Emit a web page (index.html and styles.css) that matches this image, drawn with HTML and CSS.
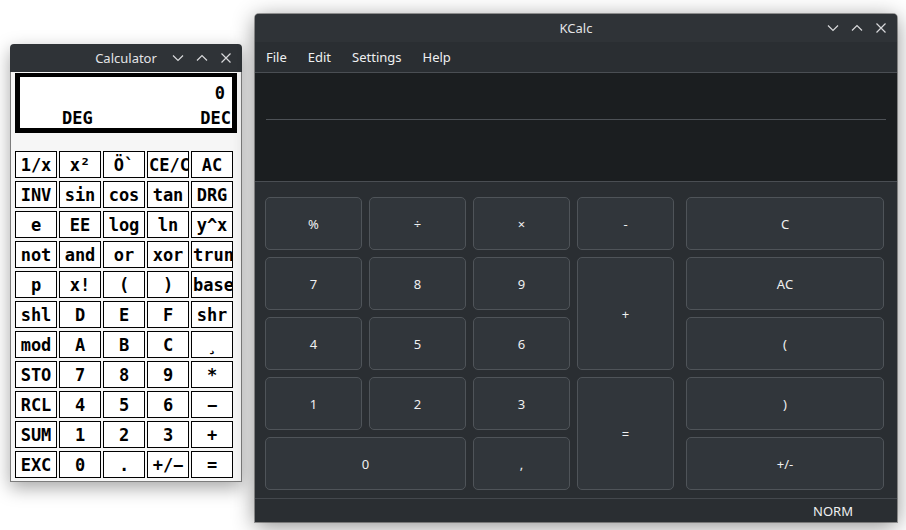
FILE: index.html
```html
<!DOCTYPE html>
<html>
<head>
<meta charset="utf-8">
<link rel="stylesheet" href="styles.css">
</head>
<body>
<div class="desk">
  <div class="win calc">
    <div class="tbar">
      <span></span>
      <span class="ttl">Calculator</span>
      <div class="ctrls">
        <span class="ctl"><svg width="12" height="12" viewBox="0 0 12 12"><polyline points="1,3.5 6,8.5 11,3.5"/></svg></span>
        <span class="ctl"><svg width="12" height="12" viewBox="0 0 12 12"><polyline points="1,8.5 6,3.5 11,8.5"/></svg></span>
        <span class="ctl"><svg width="12" height="12" viewBox="0 0 12 12"><path d="M1.5 1.5 L10.5 10.5 M10.5 1.5 L1.5 10.5"/></svg></span>
      </div>
    </div>
    <div class="cbody">
      <div class="lcd">
        <div class="lcd-r1">0</div>
        <div class="lcd-r2"><span>DEG</span><span>DEC</span></div>
      </div>
      <div class="keys">
        <div class="k">1/x</div><div class="k">x²</div><div class="k">Ö`</div><div class="k clip">CE/C</div><div class="k">AC</div>
        <div class="k">INV</div><div class="k">sin</div><div class="k">cos</div><div class="k">tan</div><div class="k">DRG</div>
        <div class="k">e</div><div class="k">EE</div><div class="k">log</div><div class="k">ln</div><div class="k">y^x</div>
        <div class="k">not</div><div class="k">and</div><div class="k">or</div><div class="k">xor</div><div class="k clip">trun</div>
        <div class="k">p</div><div class="k">x!</div><div class="k">(</div><div class="k">)</div><div class="k clip">base</div>
        <div class="k">shl</div><div class="k">D</div><div class="k">E</div><div class="k">F</div><div class="k">shr</div>
        <div class="k">mod</div><div class="k">A</div><div class="k">B</div><div class="k">C</div><div class="k">¸</div>
        <div class="k">STO</div><div class="k">7</div><div class="k">8</div><div class="k">9</div><div class="k">*</div>
        <div class="k">RCL</div><div class="k">4</div><div class="k">5</div><div class="k">6</div><div class="k">−</div>
        <div class="k">SUM</div><div class="k">1</div><div class="k">2</div><div class="k">3</div><div class="k">+</div>
        <div class="k">EXC</div><div class="k">0</div><div class="k">.</div><div class="k">+/−</div><div class="k">=</div>
      </div>
    </div>
  </div>

  <div class="win kcalc">
    <div class="tbar">
      <span></span>
      <span class="ttl">KCalc</span>
      <div class="ctrls">
        <span class="ctl"><svg width="12" height="12" viewBox="0 0 12 12"><polyline points="1,3.5 6,8.5 11,3.5"/></svg></span>
        <span class="ctl"><svg width="12" height="12" viewBox="0 0 12 12"><polyline points="1,8.5 6,3.5 11,8.5"/></svg></span>
        <span class="ctl"><svg width="12" height="12" viewBox="0 0 12 12"><path d="M1.5 1.5 L10.5 10.5 M10.5 1.5 L1.5 10.5"/></svg></span>
      </div>
    </div>
    <div class="menubar">
      <span class="mi">File</span><span class="mi">Edit</span><span class="mi">Settings</span><span class="mi">Help</span>
    </div>
    <div class="display">
      <div class="d-in"></div>
      <div class="d-line"></div>
      <div class="d-out"></div>
    </div>
    <div class="pad">
      <div class="grid4">
        <div class="b">%</div>
        <div class="b">÷</div>
        <div class="b">×</div>
        <div class="b">-</div>
        <div class="b">7</div>
        <div class="b">8</div>
        <div class="b">9</div>
        <div class="b tall">+</div>
        <div class="b">4</div>
        <div class="b">5</div>
        <div class="b">6</div>
        <div class="b">1</div>
        <div class="b">2</div>
        <div class="b">3</div>
        <div class="b tall">=</div>
        <div class="b wide">0</div>
        <div class="b">,</div>
      </div>
      <div class="col5">
        <div class="b">C</div>
        <div class="b">AC</div>
        <div class="b">(</div>
        <div class="b">)</div>
        <div class="b">+/-</div>
      </div>
    </div>
    <div class="status"><span>NORM</span></div>
  </div>
</div>
</body>
</html>
```

FILE: styles.css
```css
html, body {
  margin: 0;
  padding: 0;
  background: #ffffff;
}

.desk {
  position: relative;
  width: 906px;
  height: 530px;
  overflow: hidden;
  background: #ffffff;
}

.win {
  position: absolute;
  box-sizing: border-box;
}

/* ---------- title bars ---------- */
.tbar {
  height: 28px;
  display: grid;
  grid-template-columns: 1fr auto 1fr;
  align-items: center;
  background: #2f3337;
  border-radius: 4px 4px 0 0;
  font-family: "Noto Sans", sans-serif;
  font-size: 13px;
  color: #e3e4e6;
}

.ttl {
  line-height: 28px;
  white-space: nowrap;
}

.ctrls {
  justify-self: end;
  display: flex;
  padding-right: 4px;
}

.ctl {
  width: 24px;
  height: 28px;
  display: flex;
  align-items: center;
  justify-content: center;
}

.ctl svg {
  fill: none;
  stroke: #d8d9db;
  stroke-width: 1.2;
}

/* ---------- xcalc style window ---------- */
.calc {
  left: 10px;
  top: 44px;
  width: 232px;
  height: 438px;
  box-shadow: 0 6px 18px rgba(0, 0, 0, 0.35);
  border-radius: 4px 4px 0 0;
}

.cbody {
  box-sizing: border-box;
  height: 410px;
  background: #f6f6f6;
  border: 1px solid #7c7c7c;
  border-top: none;
  padding: 1px 4px 0 4px;
}

.lcd {
  box-sizing: border-box;
  width: 222px;
  height: 60px;
  background: #ffffff;
  border: 5px solid #000;
  border-top-width: 4px;
  padding-top: 6px;
  font-family: "DejaVu Sans Mono", monospace;
  font-weight: 700;
  font-size: 17px;
  color: #000;
}

.lcd-r1 {
  height: 20px;
  line-height: 20px;
  text-align: right;
  padding-right: 7px;
}

.lcd-r2 {
  height: 20px;
  line-height: 20px;
  margin-top: 5px;
  display: flex;
  justify-content: space-between;
  padding-left: 42px;
  padding-right: 1px;
  white-space: nowrap;
}

.keys {
  margin-top: 18px;
  display: grid;
  grid-template-columns: repeat(5, 42px);
  grid-auto-rows: 27px;
  column-gap: 2px;
  row-gap: 3px;
}

.k {
  box-sizing: border-box;
  border: 1px solid #000;
  background: #ffffff;
  color: #000;
  font-family: "DejaVu Sans Mono", monospace;
  font-weight: 700;
  font-size: 17px;
  display: flex;
  align-items: center;
  justify-content: center;
  overflow: hidden;
  white-space: nowrap;
}

.k.clip {
  justify-content: flex-start;
  padding-left: 1px;
}

/* ---------- KCalc window ---------- */
.kcalc {
  left: 255px;
  top: 14px;
  width: 642px;
  height: 508px;
  background: #2a2e32;
  border-radius: 4px 4px 0 0;
  box-shadow: 0 0 0 1px rgba(0, 0, 0, 0.35), 0 4px 22px rgba(0, 0, 0, 0.45);
  font-family: "Noto Sans", sans-serif;
  font-size: 13px;
  color: #eff0f1;
  display: flex;
  flex-direction: column;
}

.menubar {
  height: 30px;
  display: flex;
  align-items: center;
  background: #2a2e32;
  border-bottom: 1px solid #4a4e53;
}

.mi {
  padding: 0 10.5px;
  line-height: 30px;
}

.mi:first-child {
  padding-left: 11px;
}

.display {
  height: 108px;
  background: #1b1e20;
  border-bottom: 1px solid #4a4e53;
  display: flex;
  flex-direction: column;
}

.d-in {
  height: 46px;
}

.d-line {
  height: 1px;
  margin: 0 11px;
  background: #4d5156;
}

.d-out {
  flex: 1;
}

.pad {
  height: 317px;
  box-sizing: border-box;
  padding: 15px 0 0 10px;
  display: flex;
  gap: 12px;
  border-bottom: 1px solid #44484d;
}

.grid4 {
  display: grid;
  grid-template-columns: repeat(4, 97px);
  grid-template-rows: repeat(5, 53px);
  gap: 7px;
}

.col5 {
  display: grid;
  grid-template-columns: 198px;
  grid-template-rows: repeat(5, 53px);
  gap: 7px;
}

.b {
  box-sizing: border-box;
  background: #31363b;
  border: 1px solid #4f5459;
  border-radius: 5px;
  display: flex;
  align-items: center;
  justify-content: center;
  color: #eff0f1;
  font-size: 13px;
}

.b.tall {
  grid-row: span 2;
}

.b.wide {
  grid-column: span 2;
}

.status {
  flex: 1;
  display: flex;
  align-items: center;
  justify-content: flex-end;
  padding-right: 44px;
  background: #2a2e32;
}
```
